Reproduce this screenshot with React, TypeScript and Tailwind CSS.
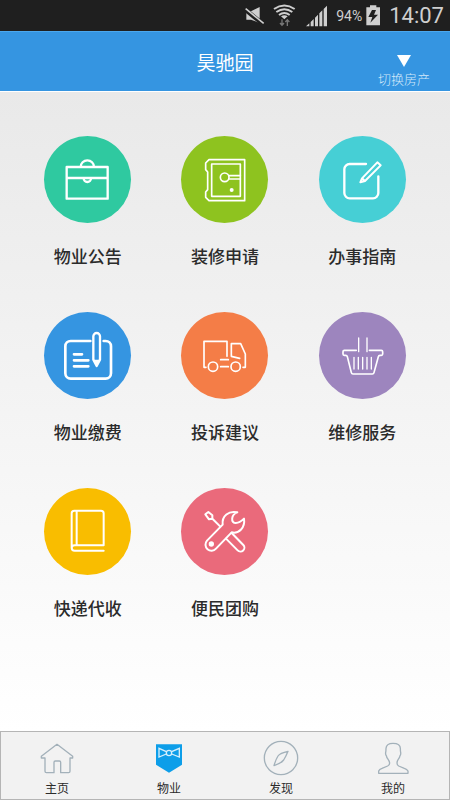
import type { ReactNode } from 'react';

interface Service {
  id: string;
  label: string;
  color: string;
  icon: ReactNode;
}

interface Tab {
  id: string;
  label: string;
  icon: ReactNode;
}

const services: Service[] = [
  {
    id: 'notice',
    label: '物业公告',
    color: 'bg-[#2fc9a0]',
    icon: (
      <g strokeWidth="7">
        <path d="M68 93H191V188H68ZM68 126H191M110 93a20 20 0 0 1 40 0" />
        <path d="M119 127a11 11 0 0 0 22 0" />
      </g>
    ),
  },
  {
    id: 'decoration',
    label: '装修申请',
    color: 'bg-[#8ec31f]',
    icon: (
      <g strokeWidth="5">
        <path d="M84 71H191V194H84L74 184V168L80 161V108L74 101V81Z" />
        <rect x="92" y="84" width="86" height="97" />
        <circle cx="131" cy="124" r="13" />
        <path d="M144 119H178M144 129H178" />
        <circle cx="152" cy="162" r="6" fill="currentColor" stroke="none" />
      </g>
    ),
  },
  {
    id: 'guide',
    label: '办事指南',
    color: 'bg-[#46cfd5]',
    icon: (
      <g strokeWidth="7">
        <path d="M141 84H92a16 16 0 0 0-16 16V171a16 16 0 0 0 16 16H162a16 16 0 0 0 16-16V121" />
        <path d="M124 139L129 127L175 79L185 88L138 135ZM129 127L138 135" strokeWidth="6" />
      </g>
    ),
  },
  {
    id: 'payment',
    label: '物业缴费',
    color: 'bg-[#3595e1]',
    icon: (
      <g strokeWidth="8">
        <path d="M139 87H80a16 16 0 0 0-16 16V184a16 16 0 0 0 16 16H185a16 16 0 0 0 16-16V103a16 16 0 0 0-16-16H179" />
        <path d="M148 73a10 10 0 0 1 20 0V143L158 162L148 143Z" strokeWidth="7" />
        <path d="M148 143H168L158 162Z" fill="currentColor" stroke="none" />
        <path d="M90 127H114M90 145H133M90 163H133" />
      </g>
    ),
  },
  {
    id: 'complaint',
    label: '投诉建议',
    color: 'bg-[#f47d47]',
    icon: (
      <g strokeWidth="5">
        <path d="M75 166H69V88H138V133M119 143H142M119 164H142" />
        <path d="M176 139L151 133V95H179L193 126V166H186" />
        <circle cx="96" cy="164" r="14" />
        <circle cx="164" cy="164" r="14" />
      </g>
    ),
  },
  {
    id: 'repair',
    label: '维修服务',
    color: 'bg-[#9d85be]',
    icon: (
      <g strokeWidth="5">
        <path d="M112 115H76q-4 0-4 4v7q0 4 4 4h4q4 0 5 4L97 182q1 4 5 4H160q4 0 5-4L178 134q1-4 5-4h4q4 0 4-4v-7q0-4-4-4H151" />
        <path d="M119 78V119M144 78V119M105 136V171M118 136V171M131 136V171M144 136V171M157 136V171" strokeWidth="4" />
      </g>
    ),
  },
  {
    id: 'express',
    label: '快递代收',
    color: 'bg-[#f9bd00]',
    icon: (
      <g strokeWidth="6">
        <path d="M179 188H92a9 9 0 0 1-9-9V76a8 8 0 0 1 8-8H171a8 8 0 0 1 8 8V172H92a9 8 0 0 0-9 8M98 70V171" />
      </g>
    ),
  },
  {
    id: 'group-buy',
    label: '便民团购',
    color: 'bg-[#ea6a7b]',
    icon: (
      <g strokeWidth="6">
        <path d="M125 110C122 84 143 67 169 73C149 80 150 103 163 105C173 106 181 100 189 92C193 119 174 138 152 133L105 182A17 17 0 1 1 78 158Z" />
        <circle cx="91" cy="168" r="8" fill="currentColor" stroke="none" />
        <path d="M135 152L170 187A11 11 0 0 0 187 171L152 135" />
        <path d="M95 93L118 116M73 79L82 72L94 82L94 92L84 94Z" />
      </g>
    ),
  },
];

const tabs: Tab[] = [
  {
    id: 'home',
    label: '主页',
    icon: (
      <svg viewBox="114 60 108 108" className="size-9" fill="none" stroke="#a3b1ba" strokeWidth="4" strokeLinejoin="round" aria-hidden="true">
        <path d="M121 109L168 73L215 109V114H207V154q0 4-4 4H179V127q0-4-4-4H163q-4 0-4 4V158H136q-4 0-4-4V114H121Z" />
      </svg>
    ),
  },
  {
    id: 'property',
    label: '物业',
    icon: (
      <svg viewBox="451 60 108 108" className="size-9" fill="none" aria-hidden="true">
        <path d="M466 73H544V134L505 158L466 134Z" fill="#0d9ee9" />
        <path d="M497 95L475 85V111L497 102M513 95L536 85V111L513 102" stroke="#d5effc" strokeWidth="4" />
        <circle cx="505" cy="99" r="8" stroke="#d5effc" strokeWidth="4" />
      </svg>
    ),
  },
  {
    id: 'discover',
    label: '发现',
    icon: (
      <svg viewBox="115 60 108 108" className="size-9" fill="none" stroke="#a3b1ba" strokeWidth="4" strokeLinejoin="round" aria-hidden="true">
        <circle cx="169" cy="114" r="50" />
        <path d="M190 94Q166 99 160 108Q153 119 148 137Q169 130 177 120Q184 109 190 94Z" />
      </svg>
    ),
  },
  {
    id: 'mine',
    label: '我的',
    icon: (
      <svg viewBox="451 60 108 108" className="size-9" fill="none" stroke="#a3b1ba" strokeWidth="4" strokeLinejoin="round" aria-hidden="true">
        <path d="M462 160V153Q464 148 472 145L489 138Q495 135 495 129Q494 123 489 116Q486 113 485 107Q482 104 483 97Q484 93 484 85Q485 70 505 70Q527 70 527 85Q527 93 528 97Q529 104 526 107Q525 113 522 116Q517 123 517 129Q517 135 522 138L539 145Q547 148 550 153V160Z" />
      </svg>
    ),
  },
];

const StatusBar = () => (
  <div className="flex h-[31px] items-center justify-end bg-[#1f1f1f] pr-1.5 font-[Roboto,sans-serif] text-[#cfcfcf]">
    <svg viewBox="60 15 60 60" className="mr-2 size-5" aria-hidden="true">
      <path d="M64 31H78L104 18V66L78 56H64Z" fill="#cfcfcf" />
      <path d="M62 27L114 69" stroke="#1f1f1f" strokeWidth="13" />
      <path d="M62 23L116 67" stroke="#cfcfcf" strokeWidth="5" />
    </svg>
    <svg viewBox="144 10 69 72" className="mr-2.5 h-6 w-[23px]" fill="none" stroke="#cfcfcf" strokeWidth="6" aria-hidden="true">
      <path d="M147 25Q178 4 209 25M154 34Q178 17 202 34M162 43Q178 31 194 43" />
      <path d="M168 47Q178 40 188 47L178 56Z" fill="#cfcfcf" stroke="none" />
      <path d="M171 56V73M165 67L171 74L177 67M187 76V58M181 64L187 57L193 64" stroke="#777777" strokeWidth="4" />
    </svg>
    <svg viewBox="240 15 66 66" className="mr-2 size-[22px]" fill="#cfcfcf" aria-hidden="true">
      <path d="M240 79L250 70V79ZM254 79V66L263 57V79ZM267 79V53L276 44V79ZM280 79V40L289 31V79ZM293 79V27L303 17V79Z" />
    </svg>
    <span className="mr-1 text-sm">94%</span>
    <svg viewBox="425 13 45 63" className="mr-2 h-[21px] w-[15px]" aria-hidden="true">
      <path d="M437 14H456V20H467V74H426V20H437Z" fill="#cfcfcf" />
      <path d="M443 28H455L449 42H461L438 66L444 49H432Z" fill="#1f1f1f" />
    </svg>
    <time className="text-[22px] leading-7">14:07</time>
  </div>
);

const Header = () => (
  <header className="grid h-[60px] grid-cols-[1fr_auto_1fr] items-center border-t border-[#4ba8ee] bg-[#3595e1] text-white">
    <h1 className="col-start-2 text-[19px] leading-6">昊驰园</h1>
    <button type="button" className="mt-5 mr-5 flex cursor-pointer flex-col items-center justify-self-end text-[13px] leading-5 font-light text-[#d3e8fa]">
      <svg viewBox="0 0 14 12" className="mb-0.5 h-3 w-3.5" fill="#ffffff" aria-hidden="true">
        <path d="M0 0H14L7 12Z" />
      </svg>
      切换房产
    </button>
  </header>
);

const ServiceGrid = () => (
  <main className="grid flex-1 grid-cols-3 content-start gap-y-11 border-t border-white bg-linear-to-b from-[#e9e9e9] via-[#f4f4f4] to-white px-[19px] pt-11 pb-8">
    {services.map((service) => (
      <button key={service.id} type="button" className="flex cursor-pointer flex-col items-center gap-5">
        <span className={`block size-[87px] rounded-full text-white ${service.color}`}>
          <svg viewBox="0 0 261 261" className="size-full" fill="none" stroke="currentColor" strokeLinecap="round" strokeLinejoin="round" aria-hidden="true">
            {service.icon}
          </svg>
        </span>
        <span className="text-[17px] leading-[25px] font-medium text-[#2b2b2b]">{service.label}</span>
      </button>
    ))}
  </main>
);

const TabBar = () => (
  <nav className="grid grid-cols-4 border border-[#b5b5b5] bg-[#f2f2f2] pt-2">
    {tabs.map((tab) => (
      <a key={tab.id} href={`#${tab.id}`} className="flex flex-col items-center text-xs leading-[23px] text-[#2b2b2b]">
        {tab.icon}
        {tab.label}
      </a>
    ))}
  </nav>
);

const App = () => (
  <div className="flex min-h-screen flex-col font-['Noto_Sans_CJK_SC',sans-serif]">
    <StatusBar />
    <Header />
    <ServiceGrid />
    <TabBar />
  </div>
);

export default App;
